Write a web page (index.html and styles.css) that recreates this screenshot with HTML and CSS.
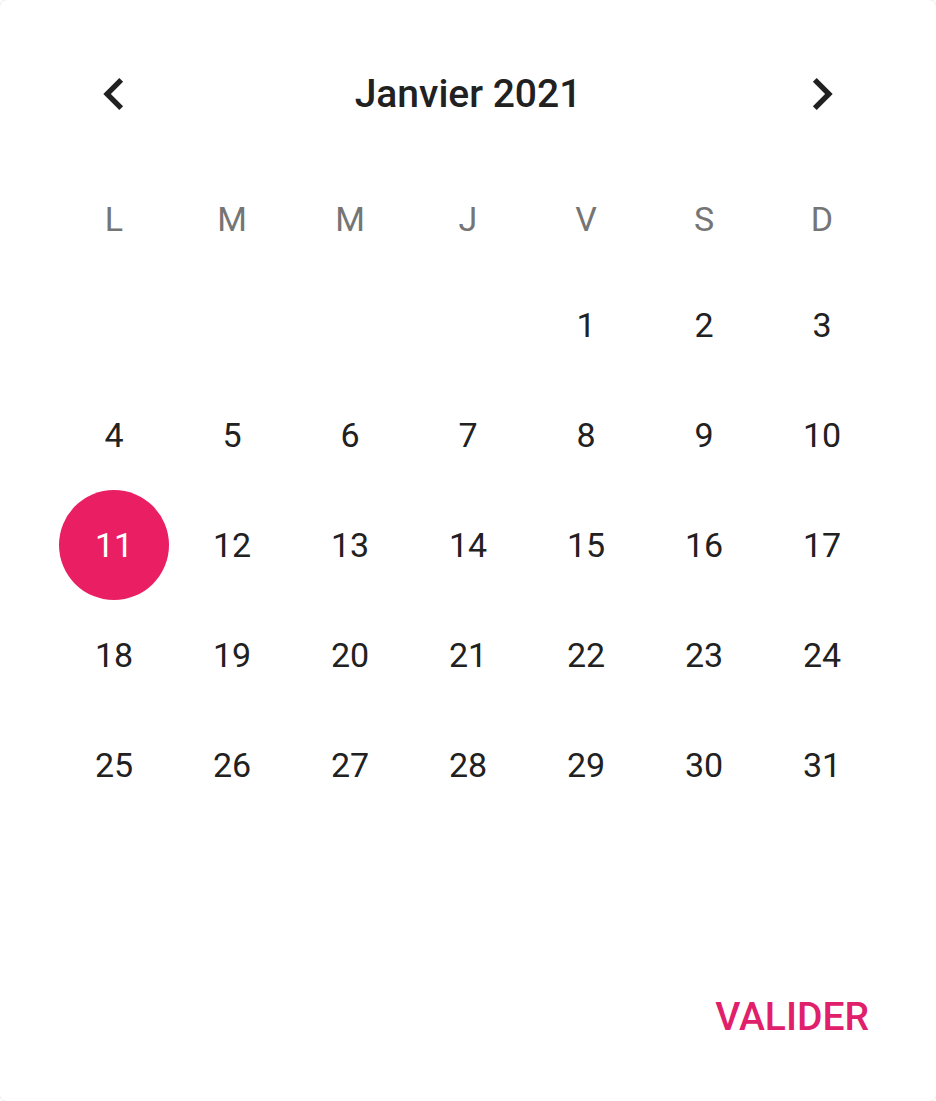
FILE: index.html
```html
<!DOCTYPE html>
<html lang="fr">
<head>
<meta charset="utf-8">
<title>Janvier 2021</title>
<link rel="stylesheet" href="styles.css">
</head>
<body>
<div class="dialog">
  <div class="header">
    <button class="nav" aria-label="Mois précédent">
      <svg viewBox="0 0 24 24" width="64" height="64"><path d="M15.41 7.41L14 6l-6 6 6 6 1.41-1.41L10.83 12z" fill="#212121"/></svg>
    </button>
    <div class="title">Janvier 2021</div>
    <button class="nav" aria-label="Mois suivant">
      <svg viewBox="0 0 24 24" width="64" height="64"><path d="M10 6L8.59 7.41 13.17 12l-4.58 4.59L10 18l6-6z" fill="#212121"/></svg>
    </button>
  </div>
  <div class="weekdays">
    <span>L</span><span>M</span><span>M</span><span>J</span><span>V</span><span>S</span><span>D</span>
  </div>
  <div class="days">
    <span></span><span></span><span></span><span></span>
    <span class="day">1</span><span class="day">2</span><span class="day">3</span>
    <span class="day">4</span><span class="day">5</span><span class="day">6</span><span class="day">7</span><span class="day">8</span><span class="day">9</span><span class="day">10</span>
    <span class="day selected">11</span><span class="day">12</span><span class="day">13</span><span class="day">14</span><span class="day">15</span><span class="day">16</span><span class="day">17</span>
    <span class="day">18</span><span class="day">19</span><span class="day">20</span><span class="day">21</span><span class="day">22</span><span class="day">23</span><span class="day">24</span>
    <span class="day">25</span><span class="day">26</span><span class="day">27</span><span class="day">28</span><span class="day">29</span><span class="day">30</span><span class="day">31</span>
  </div>
  <div class="actions">
    <button class="validate">VALIDER</button>
  </div>
</div>
</body>
</html>
```

FILE: styles.css
```css
html, body {
  margin: 0;
  padding: 0;
  background: #ffffff;
}

body {
  font-family: Roboto, "Noto Sans", sans-serif;
  color: #212121;
}

.dialog {
  box-sizing: border-box;
  width: 936px;
  height: 1101px;
  background: #ffffff;
  border-radius: 6px;
  box-shadow: 0 0 1px rgba(0, 0, 0, 0.25);
  padding: 40px 55px 0 55px;
  display: flex;
  flex-direction: column;
}

.header {
  height: 108px;
  display: grid;
  grid-template-columns: 118px 1fr 118px;
  align-items: center;
  justify-items: center;
  margin-bottom: 20px;
}

.nav {
  width: 64px;
  height: 64px;
  padding: 0;
  margin: 0;
  border: none;
  background: none;
  display: flex;
  align-items: center;
  justify-content: center;
}

.nav svg {
  display: block;
}

.title {
  font-size: 39px;
  font-weight: 500;
  color: #212121;
}

.weekdays {
  display: grid;
  grid-template-columns: repeat(7, 118px);
  height: 102px;
  line-height: 102px;
  text-align: center;
  font-size: 34px;
  color: #757575;
}

.days {
  display: grid;
  grid-template-columns: repeat(7, 118px);
  grid-auto-rows: 110px;
  font-size: 34px;
  color: #212121;
}

.day {
  display: flex;
  align-items: center;
  justify-content: center;
  line-height: 110px;
}

.day.selected {
  justify-self: center;
  width: 110px;
  height: 110px;
  border-radius: 50%;
  background: #e91e63;
  color: #ffffff;
}

.actions {
  margin-top: auto;
  height: 184px;
  display: flex;
  justify-content: flex-end;
  align-items: flex-start;
}

.validate {
  margin-top: 68px;
  padding: 0 12px;
  height: 64px;
  border: none;
  background: none;
  font-family: Roboto, "Noto Sans", sans-serif;
  font-size: 39px;
  font-weight: 500;
  color: #e0206a;
}
```
